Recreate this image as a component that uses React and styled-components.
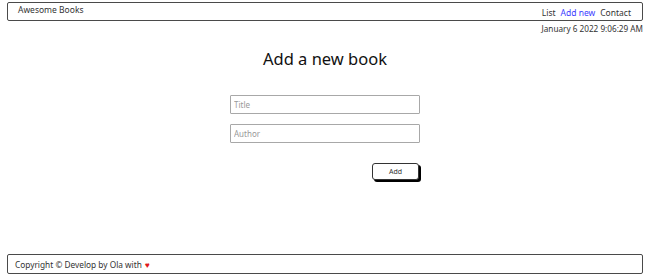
import React from 'react';
import styled, { createGlobalStyle } from 'styled-components';

const GlobalStyle = createGlobalStyle`
  html, body {
    margin: 0;
    padding: 0;
    background: #fff;
  }
  body {
    font-family: "Noto Sans", "Open Sans", sans-serif;
    color: #222;
  }
`;

const Page = styled.div`
  min-height: 100vh;
  display: flex;
  flex-direction: column;
  box-sizing: border-box;
  padding: 2px 7px 1px;
`;

const Header = styled.header`
  height: 19px;
  box-sizing: border-box;
  border: 1px solid #4a4a4a;
  border-radius: 2px;
  display: flex;
  justify-content: space-between;
  align-items: flex-start;
  padding: 0 11px 0 10px;
`;

const Brand = styled.span`
  font-size: 8.5px;
  line-height: 13px;
  color: #333;
`;

const Nav = styled.nav`
  display: flex;
  gap: 5px;
  padding-top: 3px;
`;

const NavLink = styled.a`
  font-size: 8.5px;
  line-height: 13px;
  color: ${(p) => (p.$active ? '#3b3bff' : '#333')};
  text-decoration: none;
`;

const DateLine = styled.div`
  text-align: right;
  font-size: 8.2px;
  line-height: 12px;
  margin-top: 2px;
  color: #333;
`;

const Main = styled.main`
  display: flex;
  flex-direction: column;
  align-items: center;
`;

const Heading = styled.h1`
  font-size: 16.5px;
  font-weight: 400;
  color: #111;
  margin: 12px 0 0;
  line-height: 24px;
`;

const Form = styled.form`
  width: 190px;
  display: flex;
  flex-direction: column;
  gap: 10px;
  margin-top: 24px;
`;

const Input = styled.input`
  height: 19px;
  box-sizing: border-box;
  border: 1px solid #a8a8a8;
  border-radius: 1px;
  padding: 0 3px;
  font-family: inherit;
  font-size: 8px;
  outline: none;
  &::placeholder {
    color: #999;
  }
`;

const Actions = styled.div`
  display: flex;
  justify-content: flex-end;
  margin-top: 10px;
`;

const AddButton = styled.button`
  width: 47px;
  height: 17px;
  margin-right: 1px;
  box-sizing: border-box;
  border: 1px solid #333;
  border-radius: 3px;
  background: #fff;
  box-shadow: 2px 2px 0 #000;
  font-family: inherit;
  font-size: 7px;
  color: #333;
  padding: 0;
`;

const Footer = styled.footer`
  margin-top: auto;
  height: 20px;
  box-sizing: border-box;
  border: 1px solid #4a4a4a;
  border-radius: 2px;
  display: flex;
  align-items: center;
  padding: 0 7px;
  font-size: 8.3px;
  color: #333;
`;

const Heart = styled.span`
  color: #e01b1b;
  margin-left: 3px;
`;

const App = () => {
  return (
    <>
      <GlobalStyle />
      <Page>
        <Header>
          <Brand>Awesome Books</Brand>
          <Nav>
            <NavLink href="#">List</NavLink>
            <NavLink href="#" $active>Add new</NavLink>
            <NavLink href="#">Contact</NavLink>
          </Nav>
        </Header>
        <DateLine>January 6 2022 9:06:29 AM</DateLine>
        <Main>
          <Heading>Add a new book</Heading>
          <Form onSubmit={(e) => e.preventDefault()}>
            <Input placeholder="Title" />
            <Input placeholder="Author" />
            <Actions>
              <AddButton type="submit">Add</AddButton>
            </Actions>
          </Form>
        </Main>
        <Footer>
          Copyright © Develop by Ola with<Heart>♥</Heart>
        </Footer>
      </Page>
    </>
  );
};

export default App;
